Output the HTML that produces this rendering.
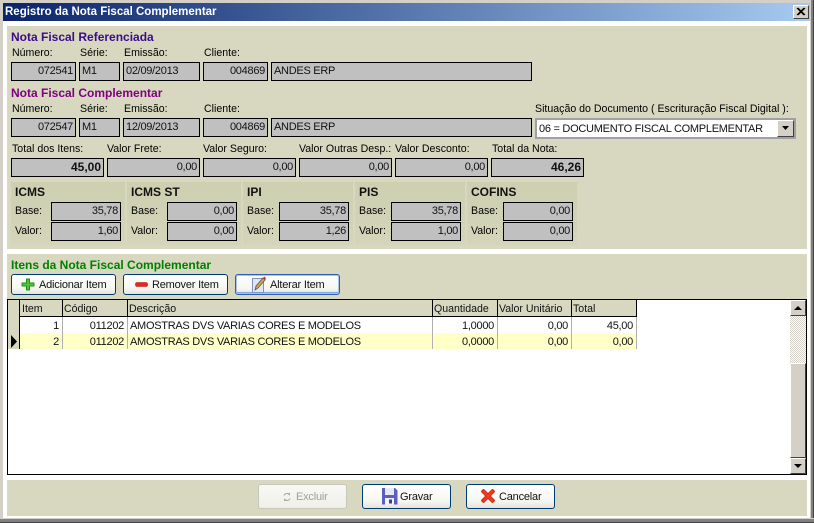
<!DOCTYPE html>
<html><head><meta charset="utf-8">
<style>
html,body{margin:0;padding:0;width:814px;height:523px;overflow:hidden;background:#fff;font-family:"Liberation Sans",sans-serif;font-size:10.6px;color:#000}
div,span{position:absolute;box-sizing:border-box;white-space:nowrap}
svg{position:absolute}
.l{height:13px;line-height:13px}
.f{background:#c0c0c0;border:1px solid #000;height:19px;line-height:17px;padding:0 2px;font-size:11px;letter-spacing:-.28px;color:#111}
.r{text-align:right}
.f.b{font-weight:bold;font-size:12px;letter-spacing:0}
.b{font-weight:bold}
.h{font-weight:bold;font-size:12px;height:14px;line-height:14px}
.tx{background:linear-gradient(#cdcfb0,#d4d5ba);height:63px;top:182px}
.btn{border:1px solid #003c74;border-radius:3px;background:linear-gradient(#fff,#f6f6f1 70%,#e4e2d8);font-size:11px;letter-spacing:-.2px;color:#111}
.btn span{line-height:14px;height:14px}
.c{height:16px;line-height:18px;font-size:11px;letter-spacing:-.28px;color:#111;padding:0 3px}
.v{width:1px;background:#b0b0b0;top:317px;height:32px}
.vh{width:1px;background:#000;top:300px;height:17px}
.hd{top:302px;height:14px;line-height:14px;font-size:10.6px;color:#111}
</style></head><body>
<!-- window frame -->
<div style="left:0;top:0;width:814px;height:523px;background:#d4d0c8"></div>
<div style="left:1px;top:1px;width:812px;height:521px;background:#fff"></div>
<div style="left:0;top:0;width:814px;height:3px;background:#d4d0c8"></div>
<div style="left:0;top:0;width:3px;height:523px;background:#d4d0c8"></div>
<div style="left:810px;top:0;width:4px;height:523px;background:linear-gradient(90deg,#d4d0c8 0 1px,#808080 1px 3px,#404040 3px)"></div>
<div style="left:0;top:518px;width:814px;height:5px;background:linear-gradient(#d4d0c8 0 1px,#808080 1px 4px,#404040 4px)"></div>
<!-- title -->
<div style="left:3px;top:3px;width:807px;height:18px;background:linear-gradient(90deg,#0a246a,#a6caf0)"></div>
<div class="b" style="left:5px;top:4px;height:16px;line-height:16px;font-size:11.5px;color:#fff">Registro da Nota Fiscal Complementar</div>
<div style="left:793px;top:5px;width:16px;height:14px;background:#d4d0c8;border:1px solid;border-color:#fff #404040 #404040 #fff"></div>
<svg style="left:796px;top:7px" width="10" height="9"><path d="M1 1L8 8M2 1L9 8M8 1L1 8M9 1L2 8" stroke="#000" stroke-width="1.1"/></svg>
<!-- panels -->
<div style="left:7px;top:26px;width:800px;height:223px;background:#d8d8c0"></div>
<div style="left:7px;top:254px;width:800px;height:46px;background:#d8d8c0"></div>
<div style="left:7px;top:480px;width:800px;height:36px;background:#d8d8c0"></div>

<div class="h" style="left:11px;top:30px;color:#3c0a8c">Nota Fiscal Referenciada</div>
<div class="l" style="left:12px;top:47px">Número:</div>
<div class="l" style="left:80px;top:47px">Série:</div>
<div class="l" style="left:124px;top:47px">Emissão:</div>
<div class="l" style="left:204px;top:47px">Cliente:</div>
<div class="f r" style="left:11px;top:62px;width:65px">072541</div>
<div class="f" style="left:79px;top:62px;width:41px">M1</div>
<div class="f" style="left:123px;top:62px;width:77px">02/09/2013</div>
<div class="f r" style="left:203px;top:62px;width:65px">004869</div>
<div class="f" style="left:271px;top:62px;width:261px">ANDES ERP</div>

<div class="h" style="left:11px;top:86px;color:#800080">Nota Fiscal Complementar</div>
<div class="l" style="left:12px;top:103px">Número:</div>
<div class="l" style="left:80px;top:103px">Série:</div>
<div class="l" style="left:124px;top:103px">Emissão:</div>
<div class="l" style="left:204px;top:103px">Cliente:</div>
<div class="l" style="left:535px;top:103px">Situação do Documento ( Escrituração Fiscal Digital ):</div>
<div class="f r" style="left:11px;top:118px;width:65px">072547</div>
<div class="f" style="left:79px;top:118px;width:41px">M1</div>
<div class="f" style="left:123px;top:118px;width:77px">12/09/2013</div>
<div class="f r" style="left:203px;top:118px;width:65px">004869</div>
<div class="f" style="left:271px;top:118px;width:261px">ANDES ERP</div>
<!-- combo -->
<div style="left:535px;top:118px;width:261px;height:21px;background:#fff;border:2px solid #a0a0a0"></div>
<div style="left:539px;top:122px;height:14px;line-height:14px;font-size:11px;letter-spacing:-.27px;color:#111">06 = DOCUMENTO FISCAL COMPLEMENTAR</div>
<div style="left:777px;top:120px;width:17px;height:17px;background:#d4d0c8;border:1px solid;border-color:#fff #404040 #404040 #fff"></div>
<svg style="left:781px;top:126px" width="9" height="5"><path d="M1 0H8L4.500 4Z" fill="#000"/></svg>

<div class="l" style="left:12px;top:143px">Total dos Itens:</div>
<div class="l" style="left:107px;top:143px">Valor Frete:</div>
<div class="l" style="left:203px;top:143px">Valor Seguro:</div>
<div class="l" style="left:299px;top:143px">Valor Outras Desp.:</div>
<div class="l" style="left:395px;top:143px">Valor Desconto:</div>
<div class="l" style="left:492px;top:143px">Total da Nota:</div>
<div class="f r b" style="left:11px;top:158px;width:93px">45,00</div>
<div class="f r" style="left:107px;top:158px;width:93px">0,00</div>
<div class="f r" style="left:203px;top:158px;width:93px">0,00</div>
<div class="f r" style="left:299px;top:158px;width:93px">0,00</div>
<div class="f r" style="left:395px;top:158px;width:93px">0,00</div>
<div class="f r b" style="left:491px;top:158px;width:93px">46,26</div>

<!-- taxes -->
<div class="tx" style="left:11px;width:114px"></div>
<div class="tx" style="left:127px;width:114px"></div>
<div class="tx" style="left:243px;width:110px"></div>
<div class="tx" style="left:355px;width:110px"></div>
<div class="tx" style="left:467px;width:110px"></div>
<div class="h" style="left:15px;top:185px;color:#111">ICMS</div>
<div class="h" style="left:131px;top:185px;color:#111">ICMS ST</div>
<div class="h" style="left:247px;top:185px;color:#111">IPI</div>
<div class="h" style="left:359px;top:185px;color:#111">PIS</div>
<div class="h" style="left:471px;top:185px;color:#111">COFINS</div>
<div class="l" style="left:15px;top:205px">Base:</div><div class="l" style="left:15px;top:225px">Valor:</div>
<div class="l" style="left:131px;top:205px">Base:</div><div class="l" style="left:131px;top:225px">Valor:</div>
<div class="l" style="left:247px;top:205px">Base:</div><div class="l" style="left:247px;top:225px">Valor:</div>
<div class="l" style="left:359px;top:205px">Base:</div><div class="l" style="left:359px;top:225px">Valor:</div>
<div class="l" style="left:471px;top:205px">Base:</div><div class="l" style="left:471px;top:225px">Valor:</div>
<div class="f r" style="left:51px;top:202px;width:70px">35,78</div><div class="f r" style="left:51px;top:222px;width:70px">1,60</div>
<div class="f r" style="left:167px;top:202px;width:70px">0,00</div><div class="f r" style="left:167px;top:222px;width:70px">0,00</div>
<div class="f r" style="left:279px;top:202px;width:70px">35,78</div><div class="f r" style="left:279px;top:222px;width:70px">1,26</div>
<div class="f r" style="left:391px;top:202px;width:70px">35,78</div><div class="f r" style="left:391px;top:222px;width:70px">1,00</div>
<div class="f r" style="left:503px;top:202px;width:70px">0,00</div><div class="f r" style="left:503px;top:222px;width:70px">0,00</div>

<div class="h" style="left:11px;top:258px;color:#008000">Itens da Nota Fiscal Complementar</div>
<!-- item buttons -->
<div class="btn" style="left:11px;top:274px;width:105px;height:21px"><span style="left:27px;top:3px">Adicionar Item</span></div>
<svg style="left:21px;top:278px" width="14" height="13"><path d="M5.500 1H8.500V5H13V8H8.500V12H5.500V8H1V5H5.500Z" fill="#54c43a" stroke="#1f8f1c" stroke-linejoin="round"/></svg>
<div class="btn" style="left:123px;top:274px;width:105px;height:21px"><span style="left:28px;top:3px">Remover Item</span></div>
<svg style="left:135px;top:282px" width="13" height="5"><rect x="0.500" y="0.500" width="12" height="4" rx="1.500" fill="#e8261c" stroke="#b01810" stroke-width=".6"/></svg>
<div class="btn" style="left:235px;top:274px;width:105px;height:21px;border-color:#2f5fb5;box-shadow:inset 0 0 0 1px #a8c4ee,inset 0 -1px 0 1px #7fa5e0"><span style="left:34px;top:3px">Alterar Item</span></div>
<svg style="left:251px;top:275px" width="16" height="19"><rect x="1.500" y="3.500" width="11" height="14" fill="#dfe8f8" stroke="#7f8fc0"/><path d="M4 15L5 11L12 3L14 5L7 13Z" fill="#d8a83c" stroke="#555" stroke-width=".8"/><path d="M12 3L13.500 1.500L15 3.500L14 5Z" fill="#d82a20"/></svg>

<!-- grid -->
<div style="left:7px;top:299px;width:800px;height:176px;background:#fff;border:1px solid #000"></div>
<div style="left:8px;top:300px;width:629px;height:17px;background:#d8d8c0"></div>
<div style="left:8px;top:300px;width:12px;height:49px;background:#d8d8c0"></div>
<div style="left:20px;top:333px;width:617px;height:16px;background:#ffffc8"></div>
<div style="left:19px;top:300px;width:1px;height:49px;background:#000"></div>
<div class="vh" style="left:62px"></div><div class="vh" style="left:127px"></div><div class="vh" style="left:432px"></div><div class="vh" style="left:497px"></div><div class="vh" style="left:571px"></div><div class="vh" style="left:636px"></div>
<div style="left:20px;top:316px;width:617px;height:1px;background:#000"></div>
<div class="v" style="left:62px"></div><div class="v" style="left:127px"></div><div class="v" style="left:432px"></div><div class="v" style="left:497px"></div><div class="v" style="left:571px"></div><div class="v" style="left:636px"></div>
<div class="hd" style="left:22px">Item</div><div class="hd" style="left:64px">Código</div><div class="hd" style="left:129px">Descrição</div><div class="hd" style="left:434px">Quantidade</div><div class="hd" style="left:499px">Valor Unitário</div><div class="hd" style="left:573px">Total</div>

<div class="c r" style="left:20px;top:317px;width:42px">1</div>
<div class="c r" style="left:63px;top:317px;width:64px">011202</div>
<div class="c" style="left:127px;top:317px;width:305px">AMOSTRAS DVS VARIAS CORES E MODELOS</div>
<div class="c r" style="left:433px;top:317px;width:64px">1,0000</div>
<div class="c r" style="left:498px;top:317px;width:73px">0,00</div>
<div class="c r" style="left:572px;top:317px;width:64px">45,00</div>
<div class="c r" style="left:20px;top:333px;width:42px">2</div>
<div class="c r" style="left:63px;top:333px;width:64px">011202</div>
<div class="c" style="left:127px;top:333px;width:305px">AMOSTRAS DVS VARIAS CORES E MODELOS</div>
<div class="c r" style="left:433px;top:333px;width:64px">0,0000</div>
<div class="c r" style="left:498px;top:333px;width:73px">0,00</div>
<div class="c r" style="left:572px;top:333px;width:64px">0,00</div>
<svg style="left:11px;top:335px" width="7" height="13"><path d="M0 0L6 6.500L0 13Z" fill="#000"/></svg>

<!-- scrollbar -->
<div style="left:790px;top:316px;width:16px;height:47px;background-image:conic-gradient(#fff 25%,#d4d0c8 0 50%,#fff 0 75%,#d4d0c8 0);background-size:2px 2px"></div>
<div style="left:790px;top:300px;width:16px;height:16px;background:#d4d0c8;border:1px solid;border-color:#fff #404040 #404040 #fff"></div>
<svg style="left:794px;top:306px" width="8" height="5"><path d="M4 0L8 4H0Z" fill="#000"/></svg>
<div style="left:790px;top:363px;width:16px;height:95px;background:#d4d0c8;border:1px solid;border-color:#fff #404040 #404040 #fff"></div>
<div style="left:790px;top:458px;width:16px;height:16px;background:#d4d0c8;border:1px solid;border-color:#fff #404040 #404040 #fff"></div>
<svg style="left:794px;top:464px" width="8" height="5"><path d="M0 0H8L4 4Z" fill="#000"/></svg>

<!-- bottom buttons -->
<div class="btn" style="left:258px;top:484px;width:89px;height:25px;border-color:#c9c7ba;background:linear-gradient(#f8f8f5,#f0efe9);color:#a0a098"><span style="left:37px;top:5px">Excluir</span></div>
<svg style="left:283px;top:492px" width="8" height="10"><path d="M1 3.500A3 3 0 0 1 6 2.500M7 6.500A3 3 0 0 1 2 7.500" stroke="#a8a8a0" fill="none"/><path d="M5 1H7V4ZM3 9H1V6Z" fill="#a8a8a0"/></svg>
<div class="btn" style="left:362px;top:484px;width:89px;height:25px"><span style="left:37px;top:5px">Gravar</span></div>
<svg style="left:382px;top:487px" width="16" height="18"><path d="M0 1H13L15.500 3.500V17.500H0Z" fill="#5a5fc0"/><rect x="3" y="1" width="9" height="7" fill="#e6e8f4"/><rect x="3" y="11" width="9" height="6.500" fill="#f2f2f8"/><rect x="7" y="12.500" width="3" height="4" fill="#3a3f90"/></svg>
<div class="btn" style="left:466px;top:484px;width:89px;height:25px"><span style="left:32px;top:5px">Cancelar</span></div>
<svg style="left:481px;top:489px" width="14" height="14"><path d="M2.500 0L7 4.500L11.500 0L14 2.500L9.500 7L14 11.500L11.500 14L7 9.500L2.500 14L0 11.500L4.500 7L0 2.500Z" fill="#f0391c" stroke="#b82410" stroke-width=".6"/></svg>
</body></html>
